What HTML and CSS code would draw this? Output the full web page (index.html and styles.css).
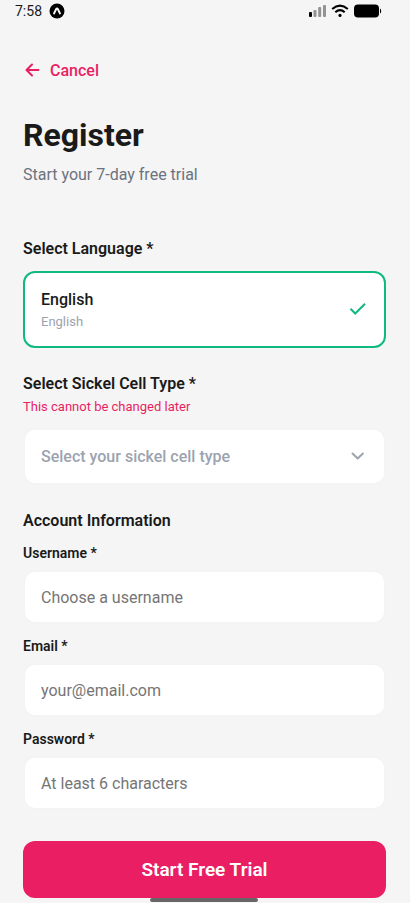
FILE: index.html
```html
<!DOCTYPE html>
<html lang="en">
<head>
<meta charset="utf-8">
<meta name="viewport" content="width=device-width, initial-scale=1">
<title>Register</title>
<link rel="stylesheet" href="styles.css">
</head>
<body>
<header class="status">
  <div class="status-group">
    <span class="time">7:58</span>
    <svg width="16" height="16" viewBox="0 0 16 16" aria-hidden="true">
      <circle cx="8" cy="8" r="7.5" fill="#000"/>
      <path d="M5 10.500 7.200 6Q8 4.700 8.800 6L11 10.500" fill="none" stroke="#f5f5f5" stroke-width="1.900" stroke-linecap="round" stroke-linejoin="round"/>
    </svg>
  </div>
  <svg width="74" height="16" viewBox="0 0 74 16" aria-hidden="true">
    <rect x="1" y="9" width="3" height="5" rx="1" fill="#000"/>
    <g fill="#929292">
      <rect x="5.500" y="7" width="3" height="7" rx="1"/>
      <rect x="10.200" y="4" width="3" height="10" rx="1"/>
      <rect x="15" y="2" width="3" height="12" rx="1"/>
    </g>
    <g fill="none" stroke="#000" stroke-width="2.1">
      <path d="M24.200 6Q32 -.8 39.800 6"/>
      <path d="M27.300 9.200Q32 5.200 36.700 9.200"/>
    </g>
    <circle cx="32" cy="12.400" r="1.600" fill="#000"/>
    <rect x="46" y="1.500" width="25" height="13" rx="4" fill="#000"/>
    <path d="M72 5.500q1.200.5 1.200 2.500t-1.200 2.500z" fill="#000"/>
  </svg>
</header>

<main class="page">
  <a class="cancel" href="#">
    <svg width="20" height="20" viewBox="0 0 20 20" aria-hidden="true">
      <path d="M15.500 9H3.700M9 3.500 3.500 9 9 14.500" fill="none" stroke="currentColor" stroke-width="2" stroke-linecap="round" stroke-linejoin="round"/>
    </svg>
    <span>Cancel</span>
  </a>
  <h1>Register</h1>
  <p class="subtitle">Start your 7-day free trial</p>

  <form>
    <section class="section">
      <h2 id="language">Select Language *</h2>
      <button class="language" type="button" aria-pressed="true" aria-describedby="language">
        <span class="language-text">
          <span class="language-name">English</span>
          <span class="language-native">English</span>
        </span>
        <svg width="20" height="20" viewBox="0 0 20 20" aria-hidden="true">
          <path d="M2.500 8.800 7.200 13.500 17 3.800" fill="none" stroke="currentColor" stroke-width="2"/>
        </svg>
      </button>
    </section>

    <section class="section">
      <label class="heading" for="cell-type">Select Sickel Cell Type *</label>
      <p class="note">This cannot be changed later</p>
      <div class="select">
        <select id="cell-type">
          <option>Select your sickel cell type</option>
        </select>
        <svg class="chevron" width="20" height="20" viewBox="0 0 20 20" aria-hidden="true">
          <path d="M4.500 7.500 9.700 12.500 14.900 7.500" fill="none" stroke="currentColor" stroke-width="2" stroke-linecap="round" stroke-linejoin="round"/>
        </svg>
      </div>
    </section>

    <section class="section">
      <h2>Account Information</h2>
      <div class="field">
        <label for="username">Username *</label>
        <input id="username" type="text" placeholder="Choose a username">
      </div>
      <div class="field">
        <label for="email">Email *</label>
        <input id="email" type="email" placeholder="your@email.com">
      </div>
      <div class="field">
        <label for="password">Password *</label>
        <input id="password" type="password" placeholder="At least 6 characters">
      </div>
    </section>

    <button class="submit" type="submit">Start Free Trial</button>
  </form>
</main>
<div class="home-bar"></div>
</body>
</html>
```
FILE: styles.css
```css
* {
  box-sizing: border-box;
}

body {
  margin: 0;
  background: #f5f5f5;
  color: #1a1a1a;
  font: 400 16px/20px Roboto, sans-serif;
}

h1, h2, p {
  margin: 0;
}

svg {
  display: block;
  flex: none;
}

button, input, select {
  font: inherit;
  color: inherit;
}

.status {
  display: flex;
  justify-content: space-between;
  align-items: center;
  height: 22px;
  padding: 0 28px 0 15px;
}

.status-group {
  display: flex;
  align-items: center;
  gap: 7px;
}

.time {
  font-size: 14px;
}

.page {
  padding: 39px 24px 4px 23px;
}

.cancel {
  display: inline-flex;
  align-items: center;
  gap: 7px;
  color: #e91e63;
  font-weight: 500;
  text-decoration: none;
  vertical-align: top;
}

h1 {
  margin-top: 34px;
  font-size: 32px;
  line-height: 40px;
  font-weight: 700;
}

.subtitle {
  margin: 10px 0 54px;
  color: #6b7280;
}

.section {
  margin-bottom: 26px;
}

h2, .heading {
  display: block;
  font-size: 16px;
  line-height: 20px;
  font-weight: 600;
}

.language {
  display: flex;
  align-items: center;
  justify-content: space-between;
  width: 100%;
  margin-top: 12px;
  padding: 17px 16px 16px;
  border: 2px solid #10b981;
  border-radius: 12px;
  background: #fff;
  color: #10b981;
  text-align: left;
}

.language-text {
  display: grid;
  gap: 3px;
}

.language-name {
  color: #1a1a1a;
  font-weight: 500;
}

.language-native {
  color: #9ca3af;
  font-size: 13px;
  line-height: 17px;
}

.note {
  margin-top: 4px;
  color: #e91e63;
  font-size: 13px;
  line-height: 18px;
}

.select {
  position: relative;
  margin-top: 12px;
  color: #9ca3af;
}

.select select {
  display: block;
  width: 100%;
  padding: 17px 48px 16px 16px;
  border: 2px solid #f3f4f6;
  border-radius: 12px;
  background: #fff;
  font-weight: 500;
  appearance: none;
}

.chevron {
  position: absolute;
  top: 18px;
  right: 18px;
  pointer-events: none;
}

.field {
  margin-top: 13px;
}

.field label {
  display: block;
  margin-bottom: 8px;
  font-size: 14px;
  line-height: 18px;
  font-weight: 600;
}

.field input {
  display: block;
  width: 100%;
  height: 54px;
  padding: 0 16px;
  border: 2px solid #f3f4f6;
  border-radius: 12px;
  background: #fff;
}

.field input::placeholder {
  color: #757575;
}

.submit {
  display: block;
  width: 100%;
  margin-top: 31px;
  padding: 18px;
  border: 0;
  border-radius: 12px;
  background: #e91e63;
  color: #fff;
  font-size: 19px;
  line-height: 21px;
  font-weight: 600;
}

.home-bar {
  position: fixed;
  bottom: 1px;
  left: 50%;
  width: 108px;
  height: 4px;
  margin-left: -55px;
  border-radius: 2px;
  background: #666;
}
```
